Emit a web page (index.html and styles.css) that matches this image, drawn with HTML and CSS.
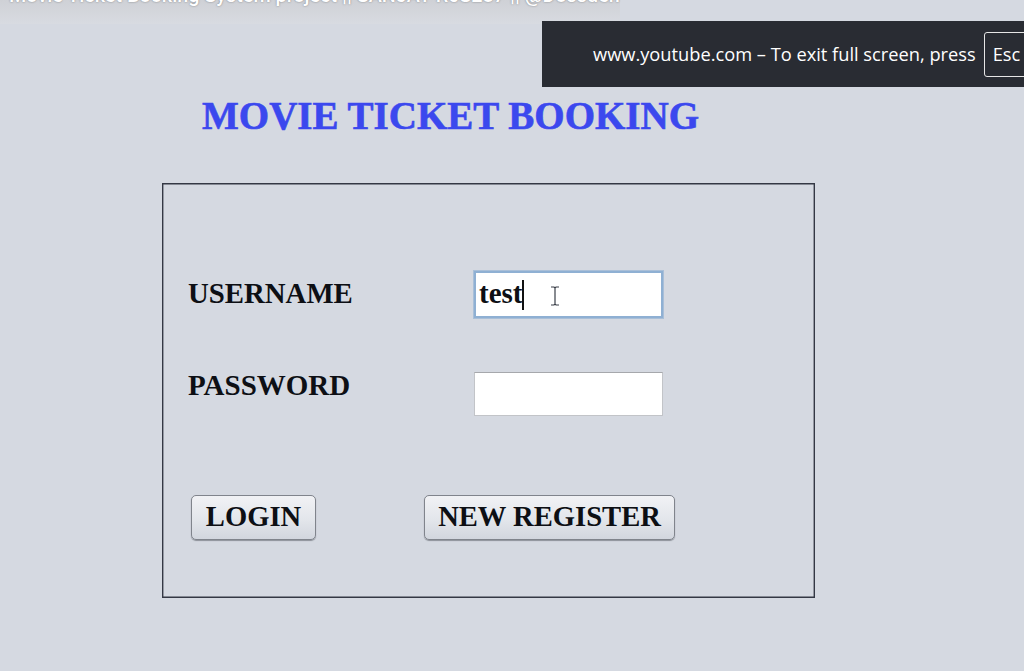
FILE: index.html
```html
<!DOCTYPE html>
<html lang="en">
<head>
<meta charset="utf-8">
<title>Movie Ticket Booking</title>
<link rel="stylesheet" href="styles.css">
</head>
<body>
<div class="video-band"></div>
<div class="video-title">Movie Ticket Booking System project || SANJAY R0S287 || @Dossden</div>
<div class="toast"><span>www.youtube.com – To exit full screen, press</span><kbd class="key">Esc</kbd></div>
<main class="app">
  <h1 class="heading">MOVIE TICKET BOOKING</h1>
  <section class="panel">
    <div class="form-row row-user">
      <label class="label">USERNAME</label>
      <div class="field focused"><span class="value">test</span><span class="caret"></span>
        <svg class="ibeam" width="10" height="20" viewBox="0 0 10 20"><path d="M1 1h3l1 1 1-1h3M5 2v16M1 19h3l1-1 1 1h3" fill="none" stroke="#3a3f48" stroke-width="1.2"/></svg>
      </div>
    </div>
    <div class="form-row row-pass">
      <label class="label">PASSWORD</label>
      <div class="field"></div>
    </div>
    <div class="actions">
      <button class="btn btn-login">LOGIN</button>
      <button class="btn btn-register">NEW REGISTER</button>
    </div>
  </section>
</main>
</body>
</html>
```
FILE: styles.css
```css
* { box-sizing: border-box; }
html, body { margin: 0; height: 671px; overflow: hidden; }
body {
  background: #d5d9e1;
  font-family: "Liberation Serif", serif;
  color: #0d0f14;
  position: relative;
}
.video-band {
  position: absolute;
  left: 0;
  top: 0;
  width: 620px;
  height: 24px;
  background: linear-gradient(#cfd1d6, #d8dbe1);
}
.video-title {
  position: absolute;
  left: 9px;
  top: -15px;
  font: 500 19.8px/22px "Roboto", sans-serif;
  color: #fff;
  white-space: nowrap;
  text-shadow: 0 0 2px rgba(60,60,60,.6);
}
.toast {
  position: absolute;
  left: 542px;
  top: 21px;
  width: 482px;
  height: 66px;
  background: #292c33;
  color: #fff;
  font: 18.25px/26px "Open Sans", sans-serif;
  display: flex;
  align-items: center;
  padding-left: 51px;
  gap: 8px;
  white-space: nowrap;
  overflow: hidden;
}
.key {
  font: inherit;
  border: 1px solid #e6e6e6;
  border-radius: 3px;
  height: 45px;
  padding: 0 8px;
  display: flex;
  align-items: center;
  width: 60px;
  flex: none;
}
.app { padding: 94px 0 0 162px; width: 815px; }
.heading {
  margin: 0 0 45px 40px;
  height: 44px;
  font: bold 39px/44px "Liberation Serif", serif;
  color: #3b48ee;
  white-space: nowrap;
  -webkit-text-stroke: 0.6px #3b48ee;
}
.panel {
  width: 653px;
  height: 415px;
  border: 1px solid #343844;
  box-shadow: inset 0 0 0 0.4px #343844;
  padding: 87px 0 0 25px;
}
.form-row { display: flex; height: 47px; }
.row-pass { margin-top: 54px; height: 44px; }
.label {
  width: 286px;
  flex: none;
  font-weight: bold;
  font-size: 28.8px;
  line-height: 44px;
  color: #0d0f14;
}
.row-pass .label { line-height: 27px; font-size: 29px; }
.field {
  width: 189px;
  height: 100%;
  background: #fff;
  border: 1px solid #c2c4c8;
  border-top-color: #a6a8ac;
  font-weight: bold;
  font-size: 29px;
  padding-left: 5px;
  display: flex;
  align-items: center;
  position: relative;
}
.focused {
  border: 2px solid #8fb0d3;
  box-shadow: 0 0 0 1px #a9bfd8;
  padding-left: 3px;
}
.value { position: relative; top: -1px; }
.caret { width: 1.5px; height: 30px; background: #111; flex: none; }
.ibeam { position: absolute; left: 74px; top: 13px; }
.actions { display: flex; margin-top: 79px; padding-left: 3px; gap: 108px; }
.btn {
  height: 45px;
  border: 1px solid #80848c;
  border-radius: 5px;
  background: linear-gradient(#f1f2f5, #e3e6eb 55%, #d2d6de);
  font: bold 28.6px/1 "Liberation Serif", serif;
  color: #0d0f14;
  padding: 0;
  box-shadow: 0 1px 1px #8d9199;
}
.btn-login { width: 125px; }
.btn-register { width: 251px; }
```
